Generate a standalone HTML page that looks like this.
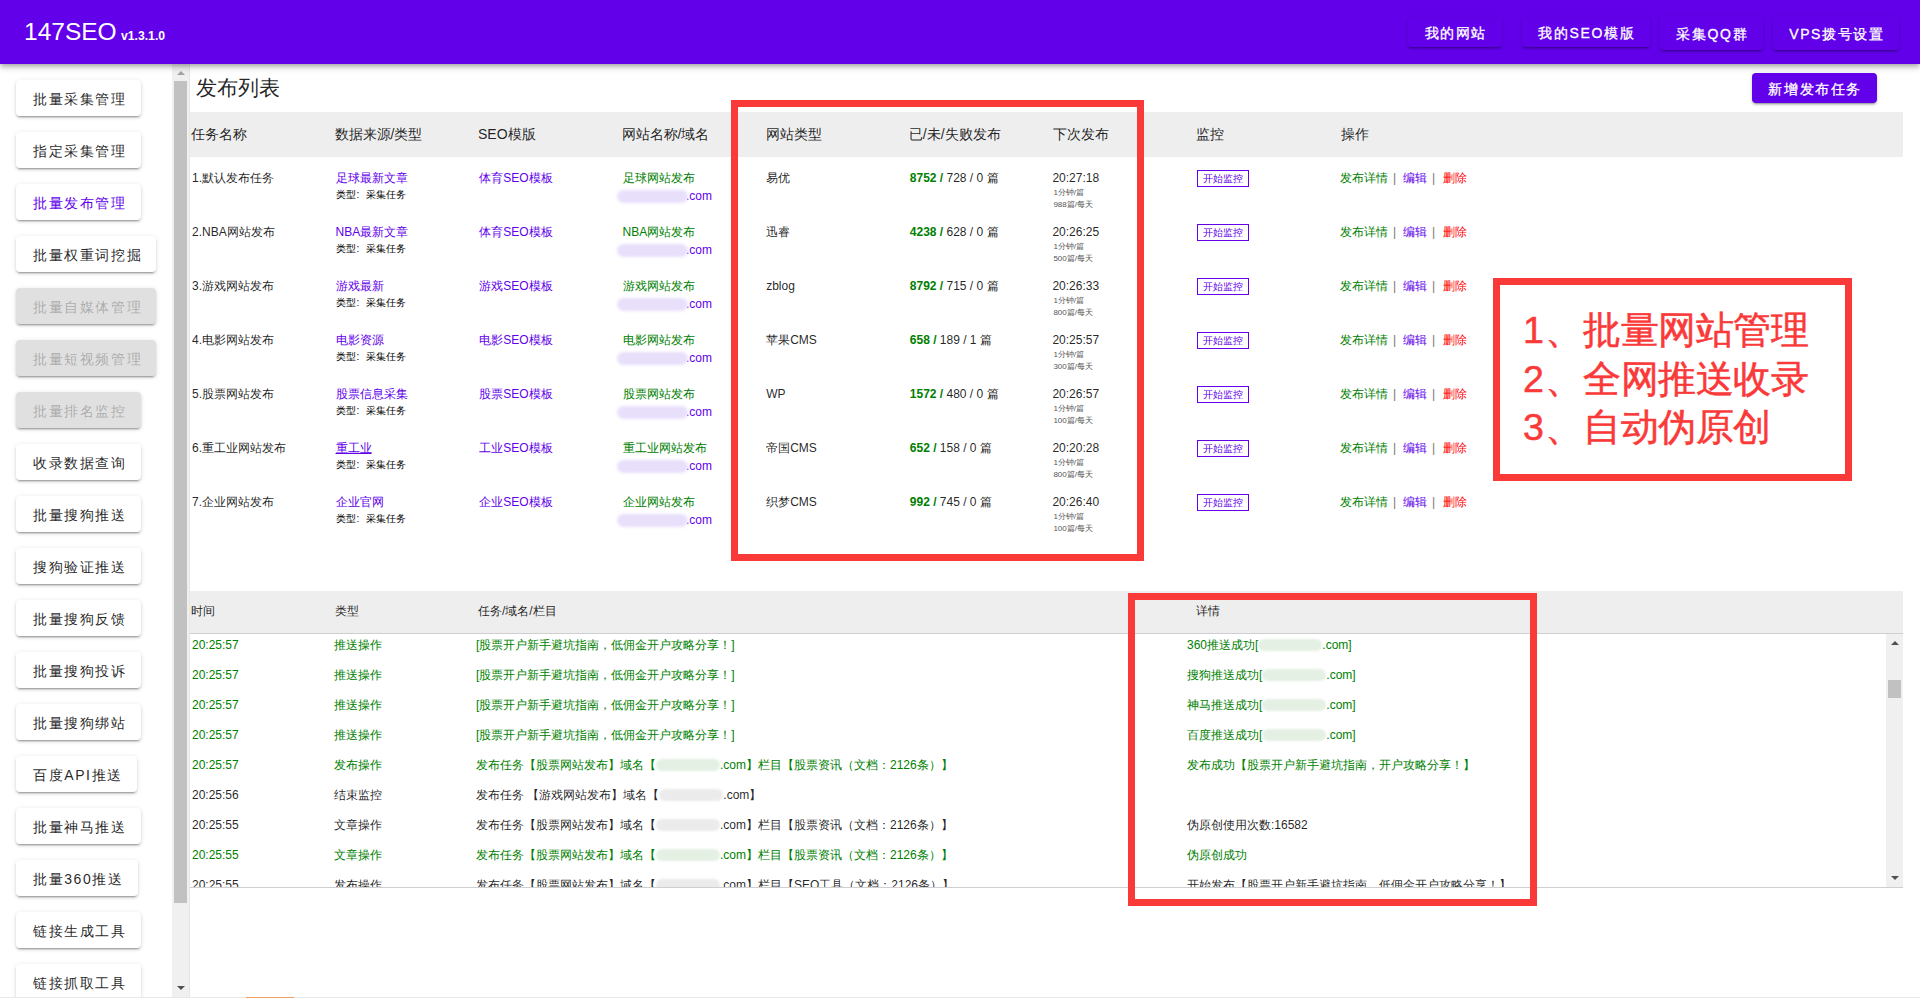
<!DOCTYPE html><html><head><meta charset="utf-8"><style>
*{box-sizing:border-box}
html,body{margin:0;padding:0;width:1920px;height:998px;overflow:hidden;background:#fff;
font-family:"Liberation Sans",sans-serif;color:rgba(0,0,0,.87)}
.a{position:absolute;white-space:nowrap}
#hdr{position:absolute;left:0;top:0;width:1920px;height:64px;background:#6200ea;z-index:5;
box-shadow:0 2px 4px -1px rgba(0,0,0,.2),0 4px 5px 0 rgba(0,0,0,.14),0 1px 10px 0 rgba(0,0,0,.12)}
.hb{position:absolute;background:#6200ea;color:#fff;font-size:14px;letter-spacing:1.6px;text-indent:1.6px;border-radius:4px;
box-shadow:0 3px 1px -2px rgba(0,0,0,.2),0 2px 2px 0 rgba(0,0,0,.14),0 1px 5px 0 rgba(0,0,0,.12);
display:flex;align-items:center;justify-content:center;font-weight:500;padding-top:3px;-webkit-text-stroke:0.3px #fff}
.sb{position:absolute;left:16px;height:36px;background:#fff;border-radius:4px;font-size:14px;letter-spacing:1.6px;padding:3px 14px 0 17px;
box-shadow:0 3px 1px -2px rgba(0,0,0,.2),0 2px 2px 0 rgba(0,0,0,.14),0 1px 5px 0 rgba(0,0,0,.12);
display:flex;align-items:center;justify-content:center;color:rgba(0,0,0,.87)}
.sb.dis{background:#e0e0e0;color:rgba(0,0,0,.26)}
.sb.act{color:#6200ea}
.band{position:absolute;left:190px;width:1713px;background:#eee}
.t12{font-size:12px;line-height:14px}
.t10{font-size:10px;line-height:12px;color:#000}
.t8{font-size:8px;line-height:11px;color:#555}
.pu{color:#6200ea}
.gr{color:#008000}
.rd{color:#f00}
.blob{position:absolute;border-radius:8px;filter:blur(1.5px)}
.rbox{position:absolute;border:7px solid #fa3939;z-index:10}
</style></head><body>
<div id="hdr">
<div class="a" style="left:24px;top:18px;font-size:24.5px;line-height:28px;color:#fff">147SEO</div>
<div class="a" style="left:121px;top:28px;font-size:12.2px;line-height:16px;font-weight:bold;color:#fff">v1.3.1.0</div>
<div class="hb" style="left:1408px;top:17px;width:94px;height:30px">我的网站</div>
<div class="hb" style="left:1522px;top:17px;width:128px;height:30px">我的SEO模版</div>
<div class="hb" style="left:1660px;top:16px;width:103px;height:34px">采集QQ群</div>
<div class="hb" style="left:1773px;top:16px;width:126px;height:34px">VPS拨号设置</div>
</div>
<div class="sb " style="top:80px">批量采集管理</div>
<div class="sb " style="top:132px">指定采集管理</div>
<div class="sb act" style="top:184px">批量发布管理</div>
<div class="sb " style="top:236px">批量权重词挖掘</div>
<div class="sb dis" style="top:288px">批量自媒体管理</div>
<div class="sb dis" style="top:340px">批量短视频管理</div>
<div class="sb dis" style="top:392px">批量排名监控</div>
<div class="sb " style="top:444px">收录数据查询</div>
<div class="sb " style="top:496px">批量搜狗推送</div>
<div class="sb " style="top:548px">搜狗验证推送</div>
<div class="sb " style="top:600px">批量搜狗反馈</div>
<div class="sb " style="top:652px">批量搜狗投诉</div>
<div class="sb " style="top:704px">批量搜狗绑站</div>
<div class="sb " style="top:756px">百度API推送</div>
<div class="sb " style="top:808px">批量神马推送</div>
<div class="sb " style="top:860px">批量360推送</div>
<div class="sb " style="top:912px">链接生成工具</div>
<div class="sb " style="top:964px">链接抓取工具</div>
<div class="a" style="left:172px;top:64px;width:17px;height:934px;background:#f0f0f0"></div>
<div class="a" style="left:174px;top:81px;width:13px;height:822px;background:#c1c1c1"></div>
<div class="a" style="left:177px;top:71px;width:0;height:0;border-left:4px solid transparent;border-right:4px solid transparent;border-bottom:4px solid #a3a3a3"></div>
<div class="a" style="left:177px;top:986px;width:0;height:0;border-left:4px solid transparent;border-right:4px solid transparent;border-top:4px solid #505050"></div>
<div class="a" style="left:189px;top:64px;width:1px;height:934px;background:#e6e6e6"></div>
<div class="a " style="left:196px;top:74px;font-size:21px;line-height:28px">发布列表</div>
<div class="hb" style="left:1752px;top:73px;width:125px;height:30px">新增发布任务</div>
<div class="band" style="top:112px;height:45px"></div>
<div class="a " style="left:191px;top:126px;font-size:14px;line-height:16px">任务名称</div>
<div class="a " style="left:334.5px;top:126px;font-size:14px;line-height:16px">数据来源/类型</div>
<div class="a " style="left:478px;top:126px;font-size:14px;line-height:16px">SEO模版</div>
<div class="a " style="left:621.6px;top:126px;font-size:14px;line-height:16px">网站名称/域名</div>
<div class="a " style="left:765.7px;top:126px;font-size:14px;line-height:16px">网站类型</div>
<div class="a " style="left:908.8px;top:126px;font-size:14px;line-height:16px">已/未/失败发布</div>
<div class="a " style="left:1053.4px;top:126px;font-size:14px;line-height:16px">下次发布</div>
<div class="a " style="left:1196px;top:126px;font-size:14px;line-height:16px">监控</div>
<div class="a " style="left:1340.6px;top:126px;font-size:14px;line-height:16px">操作</div>
<div class="a t12" style="left:192px;top:171px;">1.默认发布任务</div>
<div class="a t12 pu" style="left:335.5px;top:171px;">足球最新文章</div>
<div class="a t10" style="left:335.5px;top:189px;">类型<span style="display:inline-block;width:10px;padding-left:1px">:</span>采集任务</div>
<div class="a t12 pu" style="left:479.3px;top:171px;">体育SEO模板</div>
<div class="a t12 gr" style="left:622.6px;top:171px;">足球网站发布</div>
<div class="a t12 pu" style="left:686px;top:189px;">.com</div>
<div class="blob" style="left:617px;top:190px;width:71px;height:13px;background:#e8dffb"></div>
<div class="a t12" style="left:766.2px;top:171px;">易优</div>
<div class="a t12" style="left:909.8px;top:171px;"><b class="gr">8752 /</b> 728 / 0 篇</div>
<div class="a t12" style="left:1052.4px;top:171px;">20:27:18</div>
<div class="a t8" style="left:1053.4px;top:187px;">1分钟/篇</div>
<div class="a t8" style="left:1053.4px;top:199px;">988篇/每天</div>
<div class="a t10 pu" style="left:1197px;top:170px;width:52px;height:17px;border:1px solid #6200ea;text-align:center;line-height:15px">开始监控</div>
<div class="a t12" style="left:1340px;top:171px;"><span class="gr">发布详情</span></div>
<div class="a t12" style="left:1393px;top:171px;"><span style="color:#777">|</span></div>
<div class="a t12" style="left:1403px;top:171px;"><span class="pu">编辑</span></div>
<div class="a t12" style="left:1432px;top:171px;"><span style="color:#777">|</span></div>
<div class="a t12" style="left:1443px;top:171px;"><span class="rd">删除</span></div>
<div class="a t12" style="left:192px;top:225px;">2.NBA网站发布</div>
<div class="a t12 pu" style="left:335.5px;top:225px;">NBA最新文章</div>
<div class="a t10" style="left:335.5px;top:243px;">类型<span style="display:inline-block;width:10px;padding-left:1px">:</span>采集任务</div>
<div class="a t12 pu" style="left:479.3px;top:225px;">体育SEO模板</div>
<div class="a t12 gr" style="left:622.6px;top:225px;">NBA网站发布</div>
<div class="a t12 pu" style="left:686px;top:243px;">.com</div>
<div class="blob" style="left:617px;top:244px;width:71px;height:13px;background:#e8dffb"></div>
<div class="a t12" style="left:766.2px;top:225px;">迅睿</div>
<div class="a t12" style="left:909.8px;top:225px;"><b class="gr">4238 /</b> 628 / 0 篇</div>
<div class="a t12" style="left:1052.4px;top:225px;">20:26:25</div>
<div class="a t8" style="left:1053.4px;top:241px;">1分钟/篇</div>
<div class="a t8" style="left:1053.4px;top:253px;">500篇/每天</div>
<div class="a t10 pu" style="left:1197px;top:224px;width:52px;height:17px;border:1px solid #6200ea;text-align:center;line-height:15px">开始监控</div>
<div class="a t12" style="left:1340px;top:225px;"><span class="gr">发布详情</span></div>
<div class="a t12" style="left:1393px;top:225px;"><span style="color:#777">|</span></div>
<div class="a t12" style="left:1403px;top:225px;"><span class="pu">编辑</span></div>
<div class="a t12" style="left:1432px;top:225px;"><span style="color:#777">|</span></div>
<div class="a t12" style="left:1443px;top:225px;"><span class="rd">删除</span></div>
<div class="a t12" style="left:192px;top:279px;">3.游戏网站发布</div>
<div class="a t12 pu" style="left:335.5px;top:279px;">游戏最新</div>
<div class="a t10" style="left:335.5px;top:297px;">类型<span style="display:inline-block;width:10px;padding-left:1px">:</span>采集任务</div>
<div class="a t12 pu" style="left:479.3px;top:279px;">游戏SEO模板</div>
<div class="a t12 gr" style="left:622.6px;top:279px;">游戏网站发布</div>
<div class="a t12 pu" style="left:686px;top:297px;">.com</div>
<div class="blob" style="left:617px;top:298px;width:71px;height:13px;background:#e8dffb"></div>
<div class="a t12" style="left:766.2px;top:279px;">zblog</div>
<div class="a t12" style="left:909.8px;top:279px;"><b class="gr">8792 /</b> 715 / 0 篇</div>
<div class="a t12" style="left:1052.4px;top:279px;">20:26:33</div>
<div class="a t8" style="left:1053.4px;top:295px;">1分钟/篇</div>
<div class="a t8" style="left:1053.4px;top:307px;">800篇/每天</div>
<div class="a t10 pu" style="left:1197px;top:278px;width:52px;height:17px;border:1px solid #6200ea;text-align:center;line-height:15px">开始监控</div>
<div class="a t12" style="left:1340px;top:279px;"><span class="gr">发布详情</span></div>
<div class="a t12" style="left:1393px;top:279px;"><span style="color:#777">|</span></div>
<div class="a t12" style="left:1403px;top:279px;"><span class="pu">编辑</span></div>
<div class="a t12" style="left:1432px;top:279px;"><span style="color:#777">|</span></div>
<div class="a t12" style="left:1443px;top:279px;"><span class="rd">删除</span></div>
<div class="a t12" style="left:192px;top:333px;">4.电影网站发布</div>
<div class="a t12 pu" style="left:335.5px;top:333px;">电影资源</div>
<div class="a t10" style="left:335.5px;top:351px;">类型<span style="display:inline-block;width:10px;padding-left:1px">:</span>采集任务</div>
<div class="a t12 pu" style="left:479.3px;top:333px;">电影SEO模板</div>
<div class="a t12 gr" style="left:622.6px;top:333px;">电影网站发布</div>
<div class="a t12 pu" style="left:686px;top:351px;">.com</div>
<div class="blob" style="left:617px;top:352px;width:71px;height:13px;background:#e8dffb"></div>
<div class="a t12" style="left:766.2px;top:333px;">苹果CMS</div>
<div class="a t12" style="left:909.8px;top:333px;"><b class="gr">658 /</b> 189 / 1 篇</div>
<div class="a t12" style="left:1052.4px;top:333px;">20:25:57</div>
<div class="a t8" style="left:1053.4px;top:349px;">1分钟/篇</div>
<div class="a t8" style="left:1053.4px;top:361px;">300篇/每天</div>
<div class="a t10 pu" style="left:1197px;top:332px;width:52px;height:17px;border:1px solid #6200ea;text-align:center;line-height:15px">开始监控</div>
<div class="a t12" style="left:1340px;top:333px;"><span class="gr">发布详情</span></div>
<div class="a t12" style="left:1393px;top:333px;"><span style="color:#777">|</span></div>
<div class="a t12" style="left:1403px;top:333px;"><span class="pu">编辑</span></div>
<div class="a t12" style="left:1432px;top:333px;"><span style="color:#777">|</span></div>
<div class="a t12" style="left:1443px;top:333px;"><span class="rd">删除</span></div>
<div class="a t12" style="left:192px;top:387px;">5.股票网站发布</div>
<div class="a t12 pu" style="left:335.5px;top:387px;">股票信息采集</div>
<div class="a t10" style="left:335.5px;top:405px;">类型<span style="display:inline-block;width:10px;padding-left:1px">:</span>采集任务</div>
<div class="a t12 pu" style="left:479.3px;top:387px;">股票SEO模板</div>
<div class="a t12 gr" style="left:622.6px;top:387px;">股票网站发布</div>
<div class="a t12 pu" style="left:686px;top:405px;">.com</div>
<div class="blob" style="left:617px;top:406px;width:71px;height:13px;background:#e8dffb"></div>
<div class="a t12" style="left:766.2px;top:387px;">WP</div>
<div class="a t12" style="left:909.8px;top:387px;"><b class="gr">1572 /</b> 480 / 0 篇</div>
<div class="a t12" style="left:1052.4px;top:387px;">20:26:57</div>
<div class="a t8" style="left:1053.4px;top:403px;">1分钟/篇</div>
<div class="a t8" style="left:1053.4px;top:415px;">100篇/每天</div>
<div class="a t10 pu" style="left:1197px;top:386px;width:52px;height:17px;border:1px solid #6200ea;text-align:center;line-height:15px">开始监控</div>
<div class="a t12" style="left:1340px;top:387px;"><span class="gr">发布详情</span></div>
<div class="a t12" style="left:1393px;top:387px;"><span style="color:#777">|</span></div>
<div class="a t12" style="left:1403px;top:387px;"><span class="pu">编辑</span></div>
<div class="a t12" style="left:1432px;top:387px;"><span style="color:#777">|</span></div>
<div class="a t12" style="left:1443px;top:387px;"><span class="rd">删除</span></div>
<div class="a t12" style="left:192px;top:441px;">6.重工业网站发布</div>
<div class="a t12 pu" style="left:335.5px;top:441px;"><u>重工业</u></div>
<div class="a t10" style="left:335.5px;top:459px;">类型<span style="display:inline-block;width:10px;padding-left:1px">:</span>采集任务</div>
<div class="a t12 pu" style="left:479.3px;top:441px;">工业SEO模板</div>
<div class="a t12 gr" style="left:622.6px;top:441px;">重工业网站发布</div>
<div class="a t12 pu" style="left:686px;top:459px;">.com</div>
<div class="blob" style="left:617px;top:460px;width:71px;height:13px;background:#e8dffb"></div>
<div class="a t12" style="left:766.2px;top:441px;">帝国CMS</div>
<div class="a t12" style="left:909.8px;top:441px;"><b class="gr">652 /</b> 158 / 0 篇</div>
<div class="a t12" style="left:1052.4px;top:441px;">20:20:28</div>
<div class="a t8" style="left:1053.4px;top:457px;">1分钟/篇</div>
<div class="a t8" style="left:1053.4px;top:469px;">800篇/每天</div>
<div class="a t10 pu" style="left:1197px;top:440px;width:52px;height:17px;border:1px solid #6200ea;text-align:center;line-height:15px">开始监控</div>
<div class="a t12" style="left:1340px;top:441px;"><span class="gr">发布详情</span></div>
<div class="a t12" style="left:1393px;top:441px;"><span style="color:#777">|</span></div>
<div class="a t12" style="left:1403px;top:441px;"><span class="pu">编辑</span></div>
<div class="a t12" style="left:1432px;top:441px;"><span style="color:#777">|</span></div>
<div class="a t12" style="left:1443px;top:441px;"><span class="rd">删除</span></div>
<div class="a t12" style="left:192px;top:495px;">7.企业网站发布</div>
<div class="a t12 pu" style="left:335.5px;top:495px;">企业官网</div>
<div class="a t10" style="left:335.5px;top:513px;">类型<span style="display:inline-block;width:10px;padding-left:1px">:</span>采集任务</div>
<div class="a t12 pu" style="left:479.3px;top:495px;">企业SEO模板</div>
<div class="a t12 gr" style="left:622.6px;top:495px;">企业网站发布</div>
<div class="a t12 pu" style="left:686px;top:513px;">.com</div>
<div class="blob" style="left:617px;top:514px;width:71px;height:13px;background:#e8dffb"></div>
<div class="a t12" style="left:766.2px;top:495px;">织梦CMS</div>
<div class="a t12" style="left:909.8px;top:495px;"><b class="gr">992 /</b> 745 / 0 篇</div>
<div class="a t12" style="left:1052.4px;top:495px;">20:26:40</div>
<div class="a t8" style="left:1053.4px;top:511px;">1分钟/篇</div>
<div class="a t8" style="left:1053.4px;top:523px;">100篇/每天</div>
<div class="a t10 pu" style="left:1197px;top:494px;width:52px;height:17px;border:1px solid #6200ea;text-align:center;line-height:15px">开始监控</div>
<div class="a t12" style="left:1340px;top:495px;"><span class="gr">发布详情</span></div>
<div class="a t12" style="left:1393px;top:495px;"><span style="color:#777">|</span></div>
<div class="a t12" style="left:1403px;top:495px;"><span class="pu">编辑</span></div>
<div class="a t12" style="left:1432px;top:495px;"><span style="color:#777">|</span></div>
<div class="a t12" style="left:1443px;top:495px;"><span class="rd">删除</span></div>
<div class="band" style="top:591px;height:43px;border-bottom:1px solid #cfcfcf"></div>
<div class="a t12" style="left:191px;top:604px;">时间</div>
<div class="a t12" style="left:334.5px;top:604px;">类型</div>
<div class="a t12" style="left:478px;top:604px;">任务/域名/栏目</div>
<div class="a t12" style="left:1196px;top:604px;">详情</div>
<div class="a" style="left:190px;top:634px;width:1696px;height:253px;overflow:hidden">
<div class="a t12 gr" style="left:2px;top:4px;">20:25:57</div>
<div class="a t12 gr" style="left:144px;top:4px;">推送操作</div>
<div class="a t12 gr" style="left:286px;top:4px;">[股票开户新手避坑指南，低佣金开户攻略分享！]</div>
<div class="a t12 gr" style="left:997px;top:4px;">360推送成功[<span style="display:inline-block;width:64px;height:12px;vertical-align:-2px;background:#e4f0e4;border-radius:6px;filter:blur(1px)"></span>.com]</div>
<div class="a t12 gr" style="left:2px;top:34px;">20:25:57</div>
<div class="a t12 gr" style="left:144px;top:34px;">推送操作</div>
<div class="a t12 gr" style="left:286px;top:34px;">[股票开户新手避坑指南，低佣金开户攻略分享！]</div>
<div class="a t12 gr" style="left:997px;top:34px;">搜狗推送成功[<span style="display:inline-block;width:64px;height:12px;vertical-align:-2px;background:#e4f0e4;border-radius:6px;filter:blur(1px)"></span>.com]</div>
<div class="a t12 gr" style="left:2px;top:64px;">20:25:57</div>
<div class="a t12 gr" style="left:144px;top:64px;">推送操作</div>
<div class="a t12 gr" style="left:286px;top:64px;">[股票开户新手避坑指南，低佣金开户攻略分享！]</div>
<div class="a t12 gr" style="left:997px;top:64px;">神马推送成功[<span style="display:inline-block;width:64px;height:12px;vertical-align:-2px;background:#e4f0e4;border-radius:6px;filter:blur(1px)"></span>.com]</div>
<div class="a t12 gr" style="left:2px;top:94px;">20:25:57</div>
<div class="a t12 gr" style="left:144px;top:94px;">推送操作</div>
<div class="a t12 gr" style="left:286px;top:94px;">[股票开户新手避坑指南，低佣金开户攻略分享！]</div>
<div class="a t12 gr" style="left:997px;top:94px;">百度推送成功[<span style="display:inline-block;width:64px;height:12px;vertical-align:-2px;background:#e4f0e4;border-radius:6px;filter:blur(1px)"></span>.com]</div>
<div class="a t12 gr" style="left:2px;top:124px;">20:25:57</div>
<div class="a t12 gr" style="left:144px;top:124px;">发布操作</div>
<div class="a t12 gr" style="left:286px;top:124px;">发布任务【股票网站发布】域名【<span style="display:inline-block;width:64px;height:12px;vertical-align:-2px;background:#e4f0e4;border-radius:6px;filter:blur(1px)"></span>.com】栏目【股票资讯（文档：2126条）】</div>
<div class="a t12 gr" style="left:997px;top:124px;">发布成功【股票开户新手避坑指南，开户攻略分享！】</div>
<div class="a t12" style="left:2px;top:154px;">20:25:56</div>
<div class="a t12" style="left:144px;top:154px;">结束监控</div>
<div class="a t12" style="left:286px;top:154px;">发布任务 【游戏网站发布】域名【<span style="display:inline-block;width:64px;height:12px;vertical-align:-2px;background:#ebebeb;border-radius:6px;filter:blur(1px)"></span>.com】</div>
<div class="a t12" style="left:997px;top:154px;"></div>
<div class="a t12" style="left:2px;top:184px;">20:25:55</div>
<div class="a t12" style="left:144px;top:184px;">文章操作</div>
<div class="a t12" style="left:286px;top:184px;">发布任务【股票网站发布】域名【<span style="display:inline-block;width:64px;height:12px;vertical-align:-2px;background:#ebebeb;border-radius:6px;filter:blur(1px)"></span>.com】栏目【股票资讯（文档：2126条）】</div>
<div class="a t12" style="left:997px;top:184px;">伪原创使用次数:16582</div>
<div class="a t12 gr" style="left:2px;top:214px;">20:25:55</div>
<div class="a t12 gr" style="left:144px;top:214px;">文章操作</div>
<div class="a t12 gr" style="left:286px;top:214px;">发布任务【股票网站发布】域名【<span style="display:inline-block;width:64px;height:12px;vertical-align:-2px;background:#e4f0e4;border-radius:6px;filter:blur(1px)"></span>.com】栏目【股票资讯（文档：2126条）】</div>
<div class="a t12 gr" style="left:997px;top:214px;">伪原创成功</div>
<div class="a t12" style="left:2px;top:244px;">20:25:55</div>
<div class="a t12" style="left:144px;top:244px;">发布操作</div>
<div class="a t12" style="left:286px;top:244px;">发布任务【股票网站发布】域名【<span style="display:inline-block;width:64px;height:12px;vertical-align:-2px;background:#ebebeb;border-radius:6px;filter:blur(1px)"></span>.com】栏目【SEO工具（文档：2126条）】</div>
<div class="a t12" style="left:997px;top:244px;">开始发布【股票开户新手避坑指南，低佣金开户攻略分享！】</div>
</div>
<div class="a" style="left:190px;top:887px;width:1713px;height:1px;background:#cfcfcf"></div>
<div class="a" style="left:1886px;top:634px;width:17px;height:253px;background:#f0f0f0"></div>
<div class="a" style="left:1888px;top:680px;width:13px;height:18px;background:#c1c1c1"></div>
<div class="a" style="left:1891px;top:641px;width:0;height:0;border-left:4px solid transparent;border-right:4px solid transparent;border-bottom:4px solid #505050"></div>
<div class="a" style="left:1891px;top:876px;width:0;height:0;border-left:4px solid transparent;border-right:4px solid transparent;border-top:4px solid #505050"></div>
<div class="a" style="left:0;top:997px;width:1920px;height:1px;background:#e8e8e8"></div>
<div class="a" style="left:246px;top:997px;width:48px;height:1px;background:#f0a060"></div>
<div class="rbox" style="left:731px;top:100px;width:413px;height:461px"></div>
<div class="rbox" style="left:1493px;top:278px;width:359px;height:203px"></div>
<div class="rbox" style="left:1128px;top:593px;width:409px;height:313px"></div>
<div class="a" style="left:1523px;top:306px;font-size:37.6px;line-height:48.5px;letter-spacing:-0.5px;-webkit-text-stroke:0.5px #fa3939;color:#fa3939;z-index:11"><span style="letter-spacing:0.7px">1、</span>批量网站管理<br><span style="letter-spacing:0.7px">2、</span>全网推送收录<br><span style="letter-spacing:0.7px">3、</span>自动伪原创</div>
</body></html>
